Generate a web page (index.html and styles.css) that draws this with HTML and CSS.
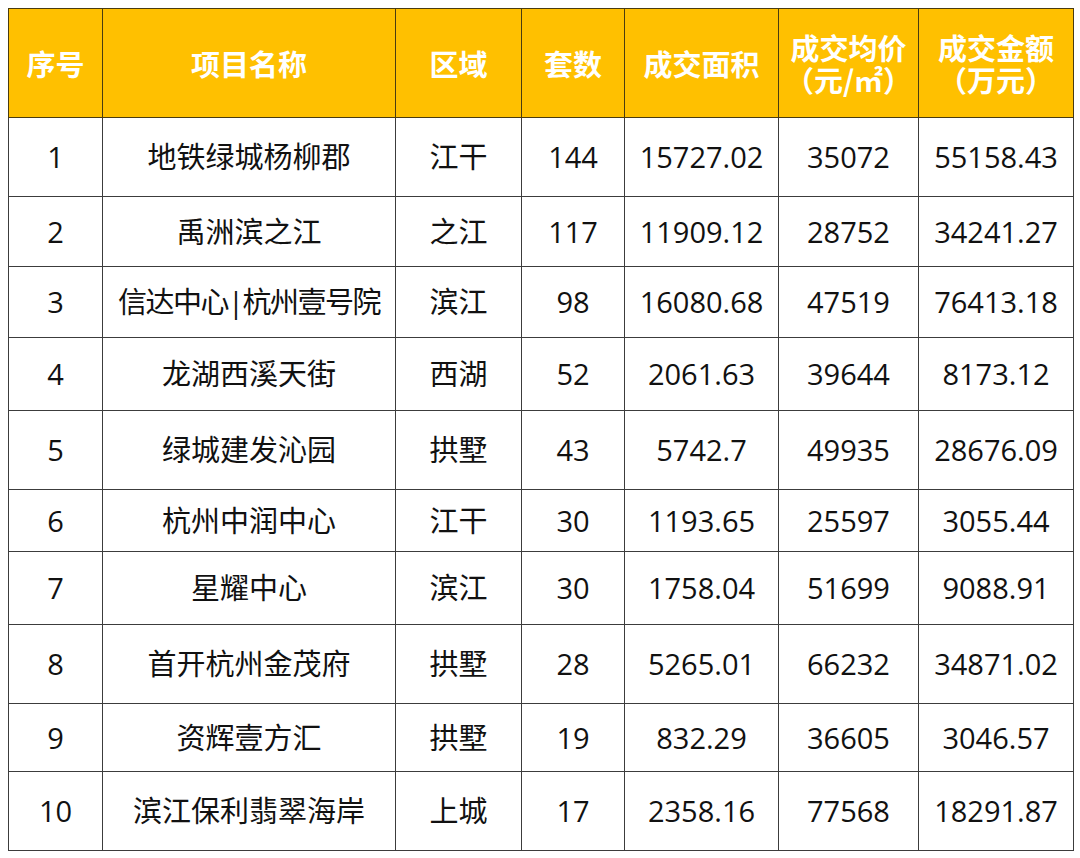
FILE: index.html
```html
<!DOCTYPE html>
<html lang="zh-CN">
<head>
<meta charset="utf-8">
<title>成交排行</title>
<link rel="stylesheet" href="styles.css">
</head>
<body>
<table class="rank">
  <colgroup>
    <col class="c1"><col class="c2"><col class="c3"><col class="c4"><col class="c5"><col class="c6"><col class="c7">
  </colgroup>
  <thead>
    <tr class="head">
      <th>序号</th>
      <th>项目名称</th>
      <th>区域</th>
      <th>套数</th>
      <th>成交面积</th>
      <th><span class="ln">成交均价</span><span class="ln">（元/㎡）</span></th>
      <th><span class="ln">成交金额</span><span class="ln">（万元）</span></th>
    </tr>
  </thead>
  <tbody>
    <tr class="r1"><td>1</td><td>地铁绿城杨柳郡</td><td>江干</td><td>144</td><td>15727.02</td><td>35072</td><td>55158.43</td></tr>
    <tr class="r2"><td>2</td><td>禹洲滨之江</td><td>之江</td><td>117</td><td>11909.12</td><td>28752</td><td>34241.27</td></tr>
    <tr class="r3"><td>3</td><td class="tight">信达中心|杭州壹号院</td><td>滨江</td><td>98</td><td>16080.68</td><td>47519</td><td>76413.18</td></tr>
    <tr class="r4"><td>4</td><td>龙湖西溪天街</td><td>西湖</td><td>52</td><td>2061.63</td><td>39644</td><td>8173.12</td></tr>
    <tr class="r5"><td>5</td><td>绿城建发沁园</td><td>拱墅</td><td>43</td><td>5742.7</td><td>49935</td><td>28676.09</td></tr>
    <tr class="r6"><td>6</td><td>杭州中润中心</td><td>江干</td><td>30</td><td>1193.65</td><td>25597</td><td>3055.44</td></tr>
    <tr class="r7"><td>7</td><td>星耀中心</td><td>滨江</td><td>30</td><td>1758.04</td><td>51699</td><td>9088.91</td></tr>
    <tr class="r8"><td>8</td><td>首开杭州金茂府</td><td>拱墅</td><td>28</td><td>5265.01</td><td>66232</td><td>34871.02</td></tr>
    <tr class="r9"><td>9</td><td>资辉壹方汇</td><td>拱墅</td><td>19</td><td>832.29</td><td>36605</td><td>3046.57</td></tr>
    <tr class="r10"><td>10</td><td>滨江保利翡翠海岸</td><td>上城</td><td>17</td><td>2358.16</td><td>77568</td><td>18291.87</td></tr>
  </tbody>
</table>
</body>
</html>
```

FILE: styles.css
```css
html, body {
  margin: 0;
  padding: 0;
  background: #ffffff;
}
body {
  padding: 8px;
  font-family: "Open Sans", "Noto Sans CJK SC", sans-serif;
  color: #111111;
}
.rank {
  border-collapse: collapse;
  table-layout: fixed;
  width: 1065px;
}
.c1 { width: 94px; }
.c2 { width: 293px; }
.c3 { width: 126px; }
.c4 { width: 103px; }
.c5 { width: 154px; }
.c6 { width: 140px; }
.c7 { width: 155px; }

.rank th, .rank td {
  border: 1px solid #3c3c3c;
  text-align: center;
  vertical-align: middle;
  padding: 0;
  white-space: nowrap;
}
.rank th {
  background: #ffc000;
  color: #ffffff;
  font-family: "Noto Sans CJK SC", sans-serif;
  font-weight: 700;
  font-size: 29px;
  line-height: 33px;
  height: 108px;
  border-color: #4a3c10;
}
.rank th .ln {
  display: block;
  height: 32px;
  line-height: 32px;
}
.rank td {
  font-size: 29px;
  line-height: 34px;
  font-weight: 400;
}
.rank td.tight { letter-spacing: -1.5px; }

.r1 td { height: 78px; }
.r2 td { height: 69px; }
.r3 td { height: 70px; }
.r4 td { height: 72px; }
.r5 td { height: 78px; }
.r6 td { height: 61px; }
.r7 td { height: 72px; }
.r8 td { height: 78px; }
.r9 td { height: 67px; }
.r10 td { height: 78px; }
```
